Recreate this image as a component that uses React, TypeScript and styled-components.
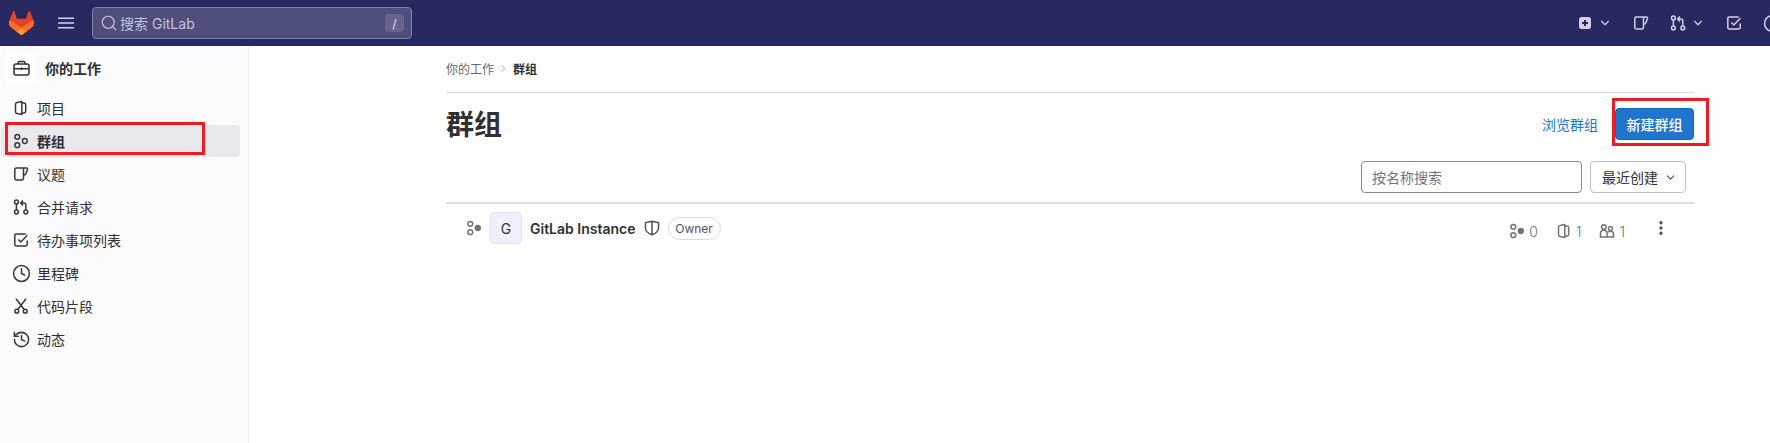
import React from 'react';
import styled, { createGlobalStyle } from 'styled-components';
import { Search, ChevronDown, ChevronRight, Clock, History, EllipsisVertical } from 'lucide-react';

const GlobalStyle = createGlobalStyle`
  html, body {
    margin: 0;
    padding: 0;
    height: 100%;
    overflow: hidden;
    background: #fff;
    font-family: Inter, "Noto Sans CJK SC", "Noto Sans", sans-serif;
    font-size: 14px;
    color: #303030;
  }
  * { box-sizing: border-box; }
`;

const Page = styled.div`
  position: relative;
  width: 1770px;
  height: 443px;
  display: flex;
  flex-direction: column;
  overflow: hidden;
`;

const TopBar = styled.header`
  flex: none;
  height: 46px;
  background: #292961;
  display: flex;
  align-items: center;
  padding: 0 0 0 9px;
  color: #d1d0e6;
`;

const Logo = styled.svg`
  width: 25px;
  height: 24px;
  margin-right: 24px;
`;

const Burger = styled.svg`
  width: 16px;
  height: 16px;
  margin-right: 18px;
  stroke: #d1d0e6;
  stroke-width: 1.6;
`;

const SearchBox = styled.div`
  width: 320px;
  height: 32px;
  display: flex;
  align-items: center;
  gap: 2px;
  padding: 0 7px;
  background: #4f4f7e;
  border: 1px solid #7f7fa8;
  border-radius: 4px;
  color: #c4c3de;
  font-size: 14px;
`;

const SearchText = styled.span`
  flex: 1;
`;

const SlashKey = styled.span`
  width: 19px;
  height: 18px;
  display: flex;
  align-items: center;
  justify-content: center;
  background: #64648f;
  border-radius: 3px;
  font-size: 12px;
  color: #e2e1f2;
`;

const TopActions = styled.nav`
  margin-left: auto;
  margin-right: -12px;
  display: flex;
  align-items: center;
  gap: 21px;
  color: #d1d0e6;
`;

const TopAction = styled.span`
  display: flex;
  align-items: center;
  gap: 5px;
`;

const Body = styled.div`
  flex: 1;
  display: flex;
  min-height: 0;
`;

const Sidebar = styled.aside`
  flex: none;
  width: 249px;
  background: #fbfafd;
  border-right: 1px solid #ececef;
  padding: 6px 8px 0 1px;
`;

const ContextHeader = styled.div`
  display: flex;
  align-items: center;
  gap: 8px;
  height: 32px;
  margin: 0 0 8px 4px;
  font-weight: 600;
  color: #303030;
`;

const ContextIcon = styled.span`
  width: 32px;
  height: 32px;
  background: #fff;
  border-radius: 4px;
  display: flex;
  align-items: center;
  justify-content: center;
`;

const NavList = styled.div`
  display: flex;
  flex-direction: column;
  gap: 1px;
`;

const NavItem = styled.div<{ $active?: boolean }>`
  height: 32px;
  display: flex;
  align-items: center;
  gap: 8px;
  padding: 0 12px;
  border-radius: 4px;
  color: #303030;
  font-weight: ${({ $active }) => ($active ? 600 : 400)};
  background: ${({ $active }) => ($active ? '#e9e8ec' : 'transparent')};
`;

const NavIcon = styled.span`
  flex: none;
  width: 16px;
  height: 16px;
  display: flex;
  align-items: center;
  justify-content: center;
  color: #3a383f;

  svg {
    flex: none;
  }
`;

const Main = styled.main`
  flex: 1;
  min-width: 0;
  padding-left: 197px;
`;

const Container = styled.div`
  width: 1248px;
`;

const Breadcrumbs = styled.div`
  height: 47px;
  display: flex;
  align-items: center;
  gap: 4px;
  font-size: 12px;
  color: #666;
  border-bottom: 1px solid #dcdcde;
  padding-bottom: 1px;
`;

const Crumb = styled.span`
  font-weight: 600;
  color: #303030;
`;

const TitleRow = styled.div`
  height: 68px;
  display: flex;
  align-items: center;
  justify-content: space-between;
  padding-bottom: 4px;
`;

const Title = styled.h1`
  margin: 0;
  font-size: 28px;
  font-weight: 700;
  line-height: 36px;
  color: #303030;
`;

const TitleActions = styled.div`
  display: flex;
  align-items: center;
  gap: 17px;
  margin-bottom: 2px;
`;

const LinkButton = styled.a`
  color: #1f75cb;
  font-size: 14px;
`;

const PrimaryButton = styled.button`
  width: 79px;
  height: 32px;
  border: 1px solid #1068bf;
  border-radius: 4px;
  background: #1f75cb;
  color: #fff;
  font: inherit;
  font-weight: 500;
  padding: 0;
`;

const FilterRow = styled.div`
  height: 43px;
  display: flex;
  justify-content: flex-end;
  gap: 8px;
  padding-right: 8px;
  border-bottom: 2px solid #dcdcde;
`;

const FilterInput = styled.div`
  width: 221px;
  height: 32px;
  border: 1px solid #89888d;
  border-radius: 4px;
  display: flex;
  align-items: center;
  padding: 0 10px;
  color: #737278;
`;

const SortSelect = styled.div`
  width: 96px;
  height: 32px;
  border: 1px solid #bfbfc3;
  border-radius: 4px;
  display: flex;
  align-items: center;
  justify-content: space-between;
  padding: 0 8px 0 11px;
  color: #303030;
`;

const GroupRow = styled.div`
  height: 40px;
  display: flex;
  align-items: center;
  padding: 8px 24px 0 20px;
`;

const RowToggle = styled.span`
  display: flex;
  width: 24px;
  color: #737278;
`;

const Avatar = styled.span`
  width: 32px;
  height: 32px;
  display: flex;
  align-items: center;
  justify-content: center;
  background: #f0effc;
  border: 1px solid #e4e3f0;
  border-radius: 4px;
  color: #303030;
  margin-right: 8px;
`;

const GroupName = styled.span`
  font-weight: 600;
  color: #303030;
  margin-right: 8px;
`;

const ShieldIcon = styled.span`
  display: flex;
  color: #535158;
  margin-right: 8px;
`;

const RoleBadge = styled.span`
  width: 53px;
  height: 23px;
  border: 1px solid #dcdcde;
  border-radius: 12px;
  display: flex;
  align-items: center;
  justify-content: center;
  font-size: 12px;
  color: #535158;
`;

const Stats = styled.div`
  margin-left: auto;
  display: flex;
  align-items: center;
  gap: 18px;
  color: #737278;
`;

const Stat = styled.span`
  display: flex;
  align-items: center;
  gap: 4px;
  padding-top: 6px;
  font-weight: 300;
`;

const MoreButton = styled.span`
  display: flex;
  color: #535158;
  margin-left: 9px;
`;

const Annotation = styled.div<{ $x: number; $y: number; $w: number; $h: number }>`
  position: absolute;
  left: ${({ $x }) => $x}px;
  top: ${({ $y }) => $y}px;
  width: ${({ $w }) => $w}px;
  height: ${({ $h }) => $h}px;
  border: 3px solid #ed1c24;
  pointer-events: none;
`;

const Svg = styled.svg`
  flex: none;
  fill: none;
  stroke: currentColor;
  stroke-width: 1.5;
`;

type IconProps = { size?: number };

const ProjectIcon = ({ size = 16 }: IconProps) => (
  <Svg width={size} height={size} viewBox="0 0 16 16">
    <path d="M8.8 1.4 4 2.4C3 2.6 2.5 3.2 2.5 4.2v7.6c0 1 .5 1.6 1.5 1.8l4.8 1V1.4ZM8.8 3h2.2c1 0 1.7.7 1.7 1.7v6.6c0 1-.7 1.7-1.7 1.7H8.8" strokeLinejoin="round" />
  </Svg>
);

const GroupIcon = ({ size = 16, filled }: IconProps & { filled?: boolean }) => (
  <Svg width={size} height={size} viewBox="0 0 16 16">
    <circle cx="4.3" cy="3.8" r="2.4" />
    <circle cx="4.3" cy="12.2" r="2.4" />
    <circle cx="11.8" cy="8" r="2.4" fill={filled ? 'currentColor' : 'none'} />
  </Svg>
);

const IssueIcon = ({ size = 16 }: IconProps) => (
  <Svg width={size} height={size} viewBox="0 0 16 16">
    <path d="M10.5 2H3.2c-.8 0-1.4.6-1.4 1.4v9.2c0 .8.6 1.4 1.4 1.4h5.9c.8 0 1.4-.6 1.4-1.4V2Zm0 0h3c.8 0 1.2.6 1 1.3L13 7.5c-.4 1-1.3 1.7-2.5 1.9" strokeLinejoin="round" />
  </Svg>
);

const MergeIcon = ({ size = 16 }: IconProps) => (
  <Svg width={size} height={size} viewBox="0 0 16 16">
    <circle cx="3.4" cy="3" r="1.9" />
    <circle cx="3.4" cy="13" r="1.9" />
    <circle cx="12.8" cy="13" r="1.9" />
    <path d="M3.4 4.9v6.2M12.8 11.1V5.8c0-1-.7-1.8-1.8-1.8H8.4M10 1.4 7.6 4l2.4 2.6" />
  </Svg>
);

const TodoIcon = ({ size = 16 }: IconProps) => (
  <Svg width={size} height={size} viewBox="0 0 16 16">
    <path d="M14.2 8.5v4c0 .8-.6 1.4-1.4 1.4H3.2c-.8 0-1.4-.6-1.4-1.4V3.4C1.8 2.6 2.4 2 3.2 2h9.6M5.4 7.4l2.4 2.6 6.6-6.8" />
  </Svg>
);

const BriefcaseIcon = () => (
  <Svg width={17} height={16} viewBox="0 0 17 16">
    <rect x="1" y="4" width="15" height="11" rx="2" />
    <path d="M5.2 4V2.4c0-.6.4-1 1-1h4.6c.6 0 1 .4 1 1V4M1 8.8h15M8.5 7.6v2.4" />
  </Svg>
);

const ScissorsIcon = () => (
  <Svg width={16} height={16} viewBox="0 0 16 16">
    <circle cx="3.8" cy="13.2" r="1.9" />
    <circle cx="12.2" cy="13.2" r="1.9" />
    <path d="M3 .8l8 10.4M13 .8 5 11.2" />
  </Svg>
);

const ShieldGlyph = () => (
  <Svg width={16} height={16} viewBox="0 0 16 16">
    <path d="M8 1.2 14.6 2.8v4.6c0 3.4-2.8 6-6.6 7.4-3.8-1.4-6.6-4-6.6-7.4V2.8L8 1.2Zm0 0v13.6" strokeLinejoin="round" />
  </Svg>
);

const UsersIcon = () => (
  <Svg width={16} height={16} viewBox="0 0 16 16">
    <circle cx="4.8" cy="4" r="2.3" />
    <circle cx="11.5" cy="5.6" r="2" />
    <path d="M1.5 14v-3.8c0-1.8 1.5-3 3.3-3s3.3 1.2 3.3 3V14H1.5ZM8.1 14h6.4v-2.8c0-1.6-1.3-2.9-3-2.9-1 0-1.8.4-2.4 1" />
  </Svg>
);

const PlusSquare = () => (
  <svg width="16" height="16" viewBox="0 0 16 16">
    <rect x="2" y="2" width="12" height="12" rx="2.5" fill="#d1d0e6" />
    <path d="M8 5v6M5 8h6" stroke="#292961" strokeWidth="2" />
  </svg>
);

const navItems = [
  { label: '项目', icon: <ProjectIcon /> },
  { label: '群组', icon: <GroupIcon />, active: true },
  { label: '议题', icon: <IssueIcon /> },
  { label: '合并请求', icon: <MergeIcon /> },
  { label: '待办事项列表', icon: <TodoIcon /> },
  { label: '里程碑', icon: <Clock size={19} strokeWidth={1.9} /> },
  { label: '代码片段', icon: <ScissorsIcon /> },
  { label: '动态', icon: <History size={19} strokeWidth={1.9} /> },
];

export default function App() {
  return (
    <Page>
      <GlobalStyle />
      <TopBar>
        <Logo viewBox="0 0 25 24">
          <path d="m24.507 9.5-.034-.09L21.082.562a.896.896 0 0 0-1.694.091l-2.29 7.01H7.825L5.535.653a.898.898 0 0 0-1.694-.09L.451 9.411.416 9.5a6.297 6.297 0 0 0 2.09 7.278l.012.01.03.022 5.16 3.867 2.56 1.935 1.554 1.176a1.051 1.051 0 0 0 1.268 0l1.555-1.176 2.56-1.935 5.197-3.89.014-.01A6.297 6.297 0 0 0 24.507 9.5Z" fill="#E24329" />
          <path d="m24.507 9.5-.034-.09a11.44 11.44 0 0 0-4.56 2.051l-7.447 5.632 4.742 3.584 5.197-3.89.014-.01A6.297 6.297 0 0 0 24.507 9.5Z" fill="#FC6D26" />
          <path d="m7.707 20.677 2.56 1.935 1.555 1.176a1.051 1.051 0 0 0 1.268 0l1.555-1.176 2.56-1.935-4.743-3.584-4.755 3.584Z" fill="#FCA326" />
          <path d="M5.01 11.461a11.43 11.43 0 0 0-4.56-2.05L.416 9.5a6.297 6.297 0 0 0 2.09 7.278l.012.01.03.022 5.16 3.867 4.745-3.584-7.444-5.632Z" fill="#FC6D26" />
        </Logo>
        <Burger viewBox="0 0 16 16">
          <path d="M0 3.2h16M0 8h16M0 12.8h16" />
        </Burger>
        <SearchBox>
          <Search size={18} strokeWidth={1.6} />
          <SearchText>搜索 GitLab</SearchText>
          <SlashKey>/</SlashKey>
        </SearchBox>
        <TopActions>
          <TopAction>
            <PlusSquare />
            <ChevronDown size={14} strokeWidth={2} />
          </TopAction>
          <IssueIcon />
          <TopAction>
            <MergeIcon />
            <ChevronDown size={14} strokeWidth={2} />
          </TopAction>
          <TodoIcon />
          <Clock size={19} strokeWidth={1.9} />
        </TopActions>
      </TopBar>
      <Body>
        <Sidebar>
          <ContextHeader>
            <ContextIcon>
              <BriefcaseIcon />
            </ContextIcon>
            你的工作
          </ContextHeader>
          <NavList>
            {navItems.map((item) => (
              <NavItem key={item.label} $active={item.active}>
                <NavIcon>{item.icon}</NavIcon>
                {item.label}
              </NavItem>
            ))}
          </NavList>
        </Sidebar>
        <Main>
          <Container>
            <Breadcrumbs>
              你的工作
              <ChevronRight size={11} color="#9a99a0" />
              <Crumb>群组</Crumb>
            </Breadcrumbs>
            <TitleRow>
              <Title>群组</Title>
              <TitleActions>
                <LinkButton>浏览群组</LinkButton>
                <PrimaryButton>新建群组</PrimaryButton>
              </TitleActions>
            </TitleRow>
            <FilterRow>
              <FilterInput>按名称搜索</FilterInput>
              <SortSelect>
                最近创建
                <ChevronDown size={13} color="#535158" />
              </SortSelect>
            </FilterRow>
            <GroupRow>
              <RowToggle>
                <GroupIcon filled />
              </RowToggle>
              <Avatar>G</Avatar>
              <GroupName>GitLab Instance</GroupName>
              <ShieldIcon>
                <ShieldGlyph />
              </ShieldIcon>
              <RoleBadge>Owner</RoleBadge>
              <Stats>
                <Stat>
                  <GroupIcon filled />0
                </Stat>
                <Stat>
                  <ProjectIcon />1
                </Stat>
                <Stat>
                  <UsersIcon />1
                </Stat>
                <MoreButton>
                  <EllipsisVertical size={18} strokeWidth={2.5} />
                </MoreButton>
              </Stats>
            </GroupRow>
          </Container>
        </Main>
      </Body>
      <Annotation $x={5} $y={122} $w={200} $h={33} />
      <Annotation $x={1612} $y={98} $w={97} $h={48} />
    </Page>
  );
}
